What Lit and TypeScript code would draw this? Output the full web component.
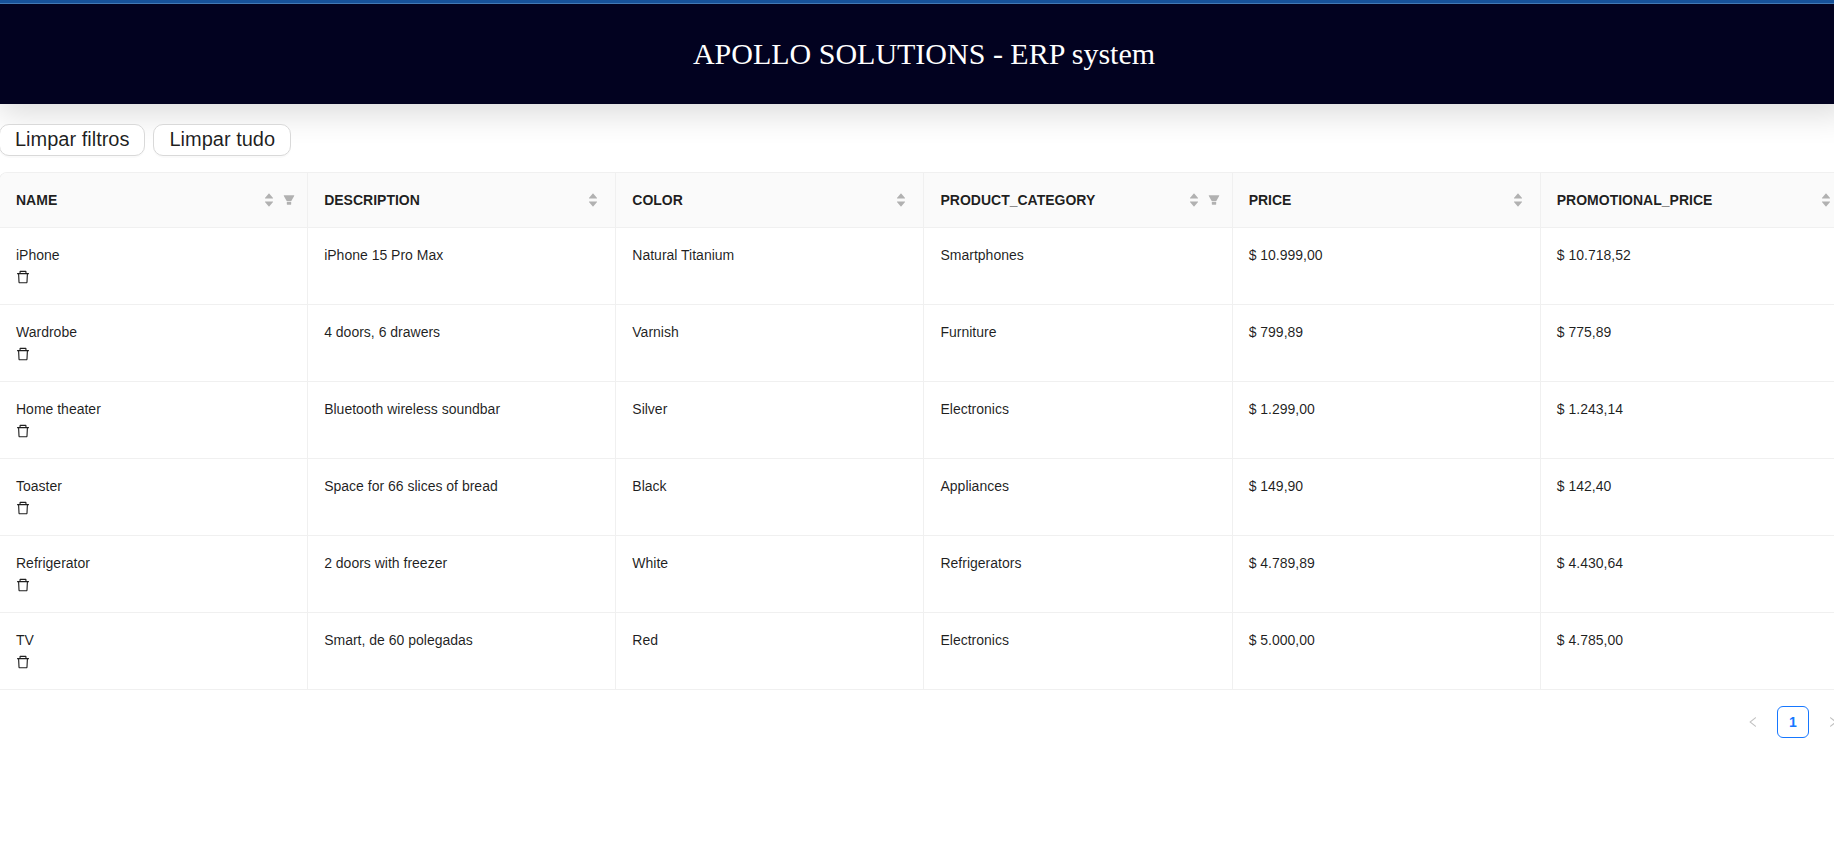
import { LitElement, html, css, svg } from "lit";
import { customElement } from "lit/decorators.js";

interface Column {
  title: string;
  filter?: boolean;
}

const columns: Column[] = [
  { title: "NAME", filter: true },
  { title: "DESCRIPTION" },
  { title: "COLOR" },
  { title: "PRODUCT_CATEGORY", filter: true },
  { title: "PRICE" },
  { title: "PROMOTIONAL_PRICE" },
];

const products: string[][] = [
  ["iPhone", "iPhone 15 Pro Max", "Natural Titanium", "Smartphones", "$ 10.999,00", "$ 10.718,52"],
  ["Wardrobe", "4 doors, 6 drawers", "Varnish", "Furniture", "$ 799,89", "$ 775,89"],
  ["Home theater", "Bluetooth wireless soundbar", "Silver", "Electronics", "$ 1.299,00", "$ 1.243,14"],
  ["Toaster", "Space for 66 slices of bread", "Black", "Appliances", "$ 149,90", "$ 142,40"],
  ["Refrigerator", "2 doors with freezer", "White", "Refrigerators", "$ 4.789,89", "$ 4.430,64"],
  ["TV", "Smart, de 60 polegadas", "Red", "Electronics", "$ 5.000,00", "$ 4.785,00"],
];

const WIDE = "0 0 1024 1024";
const TIGHT = "64 64 896 896";

const icon = (size: number, viewBox: string, path: string) => html`
  <svg width=${size} height=${size} viewBox=${viewBox} fill="currentColor" aria-hidden="true">
    ${svg`<path d=${path} />`}
  </svg>`;

const UP = "M858.9 689L530.5 308.2c-9.4-10.9-27.5-10.9-37 0L165.1 689c-12.2 14.2-1.2 35 18.5 35h656.8c19.7 0 30.7-20.8 18.5-35z";
const DOWN = "M840.4 300H183.6c-19.7 0-30.7 20.8-18.5 35l328.4 380.8c9.4 10.9 27.5 10.9 37 0L858.9 335c12.2-14.2 1.2-35-18.5-35z";
const FILTER = "M349 838c0 17.700 14.200 32 31.800 32h262.400c17.600 0 31.800-14.300 31.800-32V642H349v196zm531.100-684H143.900c-24.500 0-39.800 26.700-27.500 48l221.300 376h348.800l221.300-376c12.100-21.300-3.200-48-27.700-48z";
const TRASH = "M360 184h-8c4.400 0 8-3.600 8-8v8h304v-8c0 4.400 3.600 8 8 8h-8v72h72v-80c0-35.300-28.700-64-64-64H352c-35.300 0-64 28.700-64 64v80h72v-72zm504 72H160c-17.700 0-32 14.300-32 32v32c0 4.400 3.600 8 8 8h60.400l24.700 523c1.600 34.100 29.800 61 63.900 61h454c34.200 0 62.300-26.800 63.900-61l24.700-523H888c4.400 0 8-3.600 8-8v-32c0-17.700-14.300-32-32-32zM731.300 840H292.700l-24.200-512h487l-24.200 512z";
const LEFT = "M724 218.300V141c0-6.700-7.700-10.400-12.900-6.300L260.300 486.800a31.860 31.860 0 000 50.300l450.800 352.100c5.300 4.100 12.900.4 12.900-6.300v-77.300c0-4.900-2.300-9.600-6.100-12.600l-360-281 360-281.100c3.800-3 6.100-7.700 6.100-12.600z";
const RIGHT = "M765.700 486.800L314.900 134.700A7.970 7.970 0 00302 141v77.300c0 4.900 2.300 9.600 6.100 12.600l360 281.100-360 281.100c-3.900 3-6.100 7.700-6.100 12.600V883c0 6.700 7.700 10.400 12.900 6.300l450.800-352.100a31.960 31.960 0 000-50.400z";

@customElement("app-root")
export class AppRoot extends LitElement {
  static styles = css`
    :host {
      display: block;
      overflow: hidden;
      min-height: 100vh;
      background: #fff;
      color: rgba(0, 0, 0, 0.88);
      font: 14px/22px "Liberation Sans", Arial, sans-serif;
    }
    * { box-sizing: border-box; }
    button { font: inherit; color: inherit; cursor: pointer; }
    svg { display: block; }

    .page { margin: 0 -15px 0 -1px; }
    .banner {
      display: flex;
      align-items: center;
      justify-content: center;
      height: 104px;
      border-top: 3px solid #17529a;
      background: #020220;
      box-shadow: inset 0 1px #4279b5, 0 10px 30px rgba(0, 0, 0, 0.14);
    }
    .banner h1 {
      margin: 0;
      color: #fff;
      font: 400 30px/36px "Liberation Serif", "Times New Roman", serif;
    }

    .actions { display: flex; gap: 8px; padding: 20px 0 16px; }
    .action {
      height: 32px;
      padding: 0 15px 2px;
      border: 1px solid #d9d9d9;
      border-radius: 10px;
      background: #fff;
      box-shadow: 0 2px 0 rgba(0, 0, 0, 0.02);
      font-size: 20px;
      line-height: 28px;
    }

    .products {
      width: 100%;
      table-layout: fixed;
      border-collapse: separate;
      border-spacing: 0;
      border: 1px solid #f0f0f0;
      border-width: 1px 0 0 1px;
      border-radius: 8px 8px 0 0;
      overflow: hidden;
    }
    .products th,
    .products td {
      padding: 16px;
      border: 1px solid #f0f0f0;
      border-width: 0 1px 1px 0;
      text-align: left;
      vertical-align: top;
    }
    .products th { background: #fafafa; font-weight: 600; }
    .products td { height: 77px; }
    .heading { display: flex; align-items: center; }
    .title { flex: 1; }
    .tool { padding: 0; border: 0; background: none; color: rgba(0, 0, 0, 0.29); }
    .sorter svg + svg { margin-top: -4px; }
    .filter { margin: 0 -8px 0 4px; padding: 0 4px; }
    .remove {
      display: flex;
      align-items: center;
      height: 22px;
      padding: 0;
      border: 0;
      background: none;
    }

    .pagination { display: flex; justify-content: flex-end; gap: 8px; padding: 16px 0; }
    .step, .current {
      display: grid;
      place-items: center;
      width: 32px;
      height: 32px;
      padding: 0;
      border: 1px solid transparent;
      border-radius: 6px;
      background: #fff;
    }
    .step { color: rgba(0, 0, 0, 0.25); }
    .current { border-color: #1677ff; color: #1677ff; font-weight: 600; }
  `;

  render() {
    return html`
      <div class="page">
        <header class="banner"><h1>APOLLO SOLUTIONS - ERP system</h1></header>
        <main>
          <div class="actions">
            <button class="action">Limpar filtros</button>
            <button class="action">Limpar tudo</button>
          </div>
          <table class="products">
            <thead>
              <tr>
                ${columns.map((c) => html`
                  <th scope="col">
                    <div class="heading">
                      <span class="title">${c.title}</span>
                      <button class="tool sorter" aria-label="Sort">
                        ${icon(12, WIDE, UP)}${icon(12, WIDE, DOWN)}
                      </button>
                      ${c.filter
                        ? html`<button class="tool filter" aria-label="Filter">${icon(12, TIGHT, FILTER)}</button>`
                        : ""}
                    </div>
                  </th>`)}
              </tr>
            </thead>
            <tbody>
              ${products.map((row) => html`
                <tr>
                  ${row.map((cell, i) => html`
                    <td>
                      ${cell}
                      ${i === 0
                        ? html`<button class="remove" aria-label="Delete">${icon(14, TIGHT, TRASH)}</button>`
                        : ""}
                    </td>`)}
                </tr>`)}
            </tbody>
          </table>
          <nav class="pagination" aria-label="Pages">
            <button class="step" aria-label="Previous">${icon(12, TIGHT, LEFT)}</button>
            <button class="current" aria-current="page">1</button>
            <button class="step" aria-label="Next">${icon(12, TIGHT, RIGHT)}</button>
          </nav>
        </main>
      </div>`;
  }
}
